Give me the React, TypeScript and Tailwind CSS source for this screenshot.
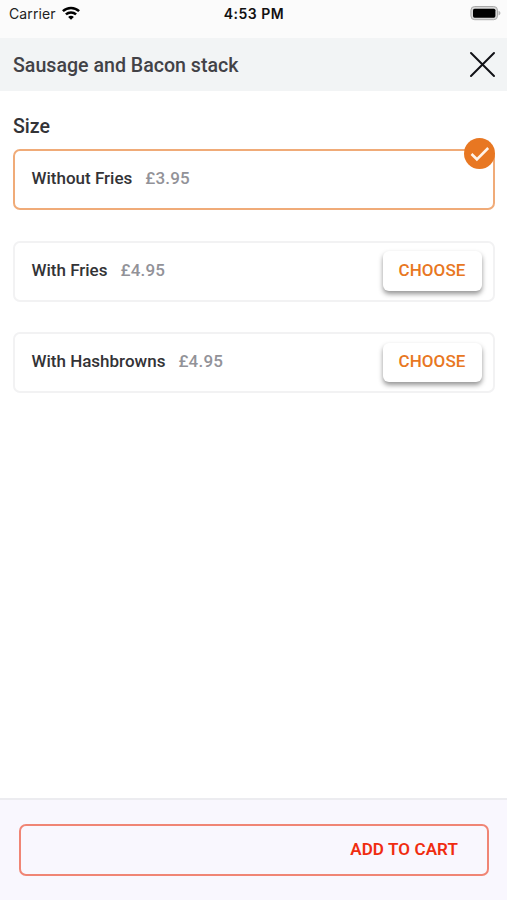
import React from "react";

type Option = { name: string; price: string; selected?: boolean };

const options: Option[] = [
  { name: "Without Fries", price: "£3.95", selected: true },
  { name: "With Fries", price: "£4.95" },
  { name: "With Hashbrowns", price: "£4.95" },
];

function StatusBar() {
  return (
    <div className="grid h-[38px] grid-cols-[1fr_auto_1fr] items-start bg-[#fbfbfb] pr-[6px] pl-[9px] text-black">
      <div className="flex items-center gap-[6px] pt-1 font-['Inter',sans-serif] text-[14px] leading-5 tracking-[0.1px] text-[#222]">
        <span>Carrier</span>
        <svg width="18" height="14" viewBox="0 0 18 14" fill="none" stroke="#000" strokeWidth="2.5" className="-mt-0.5">
          <path d="M0.9 5.2C5.4.9 12.6.9 17.1 5.2" />
          <path d="M3.9 8.4c2.9-2.7 7.3-2.7 10.2 0" />
          <path d="M9 13.8 6.1 10.9c1.6-1.5 4.2-1.5 5.8 0Z" fill="#000" stroke="none" />
        </svg>
      </div>
      <div className="-ml-[2px] pt-1 font-['Inter',sans-serif] text-[14px] leading-5 font-semibold tracking-[0.5px] text-[#111]">4:53 PM</div>
      <svg width="31" height="16" viewBox="0 0 31 16" className="mt-[5px] justify-self-end">
        <rect x="0.9" y="1.5" width="26.6" height="13.2" rx="3.8" fill="#d8d8d8" stroke="#aaa" strokeWidth="1" />
        <rect x="3" y="3.7" width="22.4" height="9" rx="1.6" fill="#000" />
        <path d="M28.5 5.7c2.6.8 2.6 4 0 4.8Z" fill="#b5b5b5" />
      </svg>
    </div>
  );
}

function OptionCard({ name, price, selected }: Option) {
  return (
    <div
      className={
        selected
          ? "relative flex h-[61px] items-start justify-between rounded-[7px] border-2 border-[#f0ab78] pl-[16.5px]"
          : "relative flex h-[61px] items-start justify-between rounded-[7px] border-2 border-[#f2f2f3] pl-[16.5px]"
      }
    >
      <div className="flex gap-[13px] pt-[15px] text-[17px] leading-6 font-medium">
        <span className="text-[#333336]">{name}</span>
        <span className="tracking-[0.2px] text-[#929298]">{price}</span>
      </div>
      {selected ? (
        <div className="absolute -top-[13px] -right-[2px] flex size-[31px] items-center justify-center rounded-full bg-[#e87722]">
          <svg width="20" height="16" viewBox="0 0 20 16" fill="none" stroke="#fff3e8" strokeWidth="2.6">
            <path d="m1.5 8 5.4 5.3L18.2 2" />
          </svg>
        </div>
      ) : (
        <button className="mt-[8.5px] mr-[11px] h-[39.5px] w-[99px] rounded-[6px] bg-white pr-px pb-[2px] text-[17px] leading-6 font-medium tracking-[0.1px] text-[#e87722] shadow-[0_3px_5px_rgba(0,0,0,0.42)]">
          CHOOSE
        </button>
      )}
    </div>
  );
}

export default function App() {
  return (
    <div className="flex h-[900px] w-[507px] flex-col bg-white font-['Roboto',sans-serif]">
      <StatusBar />
      <header className="flex h-[53px] items-center justify-between bg-[#f2f4f5] pr-[11px] pl-[13px]">
        <h1 className="pt-[2px] text-[19.6px] leading-6 font-medium text-[#424247]">Sausage and Bacon stack</h1>
        <button aria-label="Close">
          <svg width="27" height="27" viewBox="0 0 27 27" fill="none" stroke="#111116" strokeWidth="2" strokeLinecap="round">
            <path d="m2 2 23 23M25 2 2 25" />
          </svg>
        </button>
      </header>
      <main className="flex-1 pt-6 pr-3 pl-[13px]">
        <h2 className="mb-[10px] text-[19.6px] leading-6 font-medium text-[#333336]">Size</h2>
        <div className="flex flex-col gap-[30.5px]">
          {options.map((o) => (
            <OptionCard key={o.name} {...o} />
          ))}
        </div>
      </main>
      <footer className="h-[102px] border-t-2 border-[#ececf0] bg-[#f9f7fe] pt-6 pr-[18px] pl-[19px]">
        <button className="flex h-[52px] w-full items-center justify-end rounded-[7px] border-2 border-[#f08575] pr-[29px] pb-[2px] text-[17px] leading-6 font-semibold tracking-[0.1px] text-[#f02c10]">
          ADD TO CART
        </button>
      </footer>
    </div>
  );
}
